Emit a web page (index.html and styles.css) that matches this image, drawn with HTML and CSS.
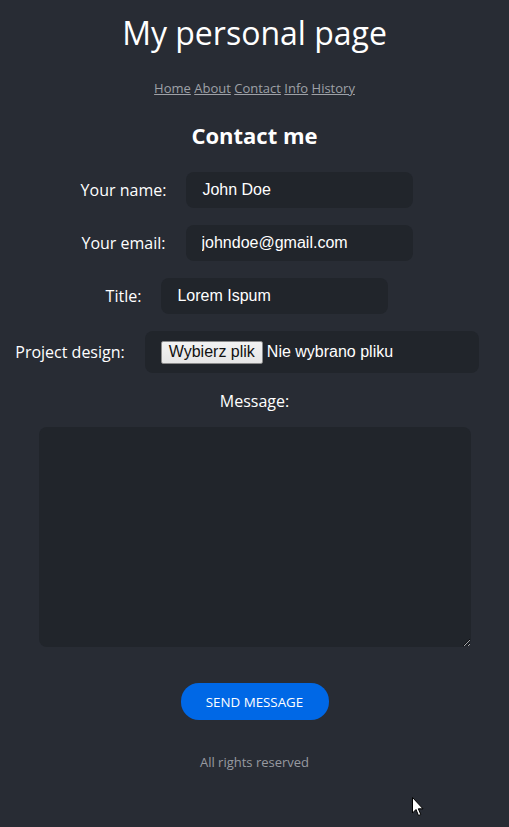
FILE: index.html
```html
<!DOCTYPE html>
<html lang="pl">
<head>
<meta charset="utf-8">
<title>My personal page</title>
<link rel="stylesheet" href="styles.css">
</head>
<body>
<header class="header">
  <h1 class="title">My personal page</h1>
  <nav class="nav">
    <a href="#">Home</a> <a href="#">About</a> <a href="#">Contact</a> <a href="#">Info</a> <a href="#">History</a>
  </nav>
</header>
<main class="main">
  <h2 class="heading">Contact me</h2>
  <form class="form">
    <div class="row">
      <label class="label" for="name">Your name:</label>
      <input class="field" id="name" type="text" value="John Doe">
    </div>
    <div class="row">
      <label class="label" for="email">Your email:</label>
      <input class="field" id="email" type="email" value="johndoe@gmail.com">
    </div>
    <div class="row">
      <label class="label" for="title">Title:</label>
      <input class="field" id="title" type="text" value="Lorem Ispum">
    </div>
    <div class="row">
      <label class="label">Project design:</label>
      <div class="file">
        <span class="file-btn">Wybierz plik</span>
        <span class="file-text">Nie wybrano pliku</span>
      </div>
    </div>
    <label class="msg-label" for="msg">Message:</label>
    <textarea class="msg" id="msg"></textarea>
    <button class="send" type="button">SEND MESSAGE</button>
  </form>
</main>
<footer class="footer">All rights reserved</footer>
<svg class="cursor" width="13" height="20" viewBox="0 0 13 20"><path d="M0.5 0.5 L0.5 16 L4 12.5 L6.5 18.5 L8.8 17.5 L6.3 11.8 L11 11.8 Z" fill="#fff" stroke="#000" stroke-width="1"/></svg>
</body>
</html>
```

FILE: styles.css
```css
html, body {
  margin: 0;
  padding: 0;
}
body {
  background: #282c34;
  color: #ffffff;
  font-family: "Open Sans", "Liberation Sans", sans-serif;
  min-height: 827px;
  position: relative;
}
.header {
  text-align: center;
}
.title {
  margin: 11px 0 0;
  font-size: 32px;
  font-weight: 400;
  line-height: normal;
}
.nav {
  margin-top: 25px;
  font-size: 13px;
  line-height: normal;
}
.nav a {
  color: #9ea1a7;
}
.main {
  display: flex;
  flex-direction: column;
  align-items: center;
}
.heading {
  margin: 23px 0 22px;
  font-size: 22px;
  font-weight: 700;
  line-height: normal;
}
.form {
  display: flex;
  flex-direction: column;
  align-items: center;
  width: 100%;
}
.row {
  display: flex;
  align-items: center;
  justify-content: center;
  gap: 20px;
  padding-right: 15px;
  margin-bottom: 17px;
  font-size: 16px;
}
.label {
  white-space: nowrap;
}
.field {
  box-sizing: border-box;
  width: 227px;
  height: 36px;
  border: none;
  border-radius: 8px;
  background: #21252b;
  color: #ffffff;
  font-family: "Liberation Sans", Arial, sans-serif;
  font-size: 16px;
  padding: 0 16px;
  outline: none;
}
.file {
  box-sizing: border-box;
  width: 334px;
  height: 42px;
  border-radius: 8px;
  background: #21252b;
  padding: 0 16px;
  display: flex;
  align-items: center;
  gap: 4px;
  font-family: "Liberation Sans", Arial, sans-serif;
  font-size: 16px;
}
.file-btn {
  box-sizing: border-box;
  height: 23px;
  padding: 0 7px;
  display: flex;
  align-items: center;
  background: linear-gradient(#f2f2f2, #e6e6e6);
  border: 1px solid #8a8a8a;
  border-radius: 2px;
  color: #111;
}
.file-text {
  color: #ffffff;
}
.msg-label {
  font-size: 16px;
  line-height: normal;
  margin-bottom: 15px;
}
.msg {
  box-sizing: border-box;
  width: 432px;
  height: 220px;
  border: none;
  border-radius: 8px;
  background: #21252b;
  color: #fff;
  outline: none;
  display: block;
}
.send {
  margin-top: 36px;
  width: 148px;
  height: 37px;
  border: none;
  border-radius: 18px;
  background: #0068e6;
  color: #ffffff;
  font-family: "Open Sans", sans-serif;
  font-size: 13.33px;
}
.footer {
  margin-top: 33px;
  text-align: center;
  font-size: 13px;
  color: #979aa0;
  line-height: normal;
}
.cursor {
  position: absolute;
  left: 412px;
  top: 797px;
}
```
